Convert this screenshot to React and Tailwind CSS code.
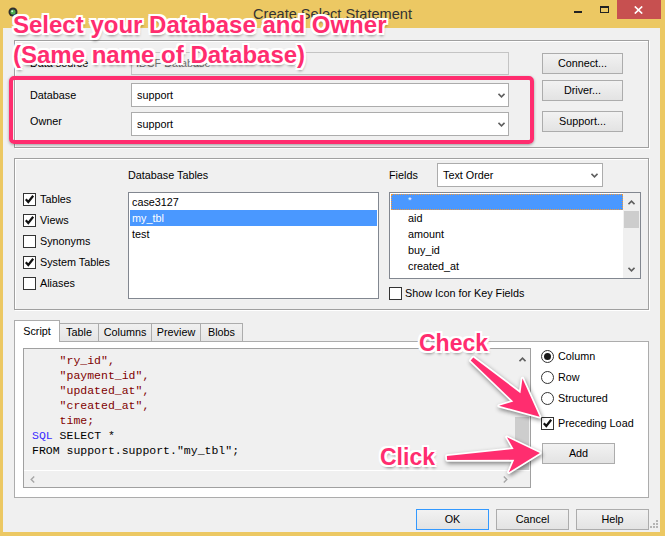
import React from 'react';

// small chevron used by combos and scrollbars
const Chevron = ({ dir = 'down', color = '#5f5f5f' }) => {
  const d = {
    down: 'M0.5 0.8 L3.5 3.8 L6.5 0.8',
    up: 'M0.5 4.2 L3.5 1.2 L6.5 4.2',
  }[dir];
  return (
    <svg width="7" height="5" viewBox="0 0 7 5" className="shrink-0">
      <path d={d} fill="none" stroke={color} strokeWidth="1.6" />
    </svg>
  );
};

const SideArrow = ({ dir = 'left', color = '#a6a6a6' }) => (
  <svg width="5" height="7" viewBox="0 0 5 7" className="shrink-0">
    <path d={dir === 'left' ? 'M4.2 0.5 L1.2 3.5 L4.2 6.5' : 'M0.8 0.5 L3.8 3.5 L0.8 6.5'} fill="none" stroke={color} strokeWidth="1.4" />
  </svg>
);

const CheckBox = ({ checked }) => (
  <span className="w-[13px] h-[13px] border border-[#333] bg-white flex items-center justify-center shrink-0">
    {checked && (
      <svg width="11" height="11" viewBox="0 0 11 11">
        <path d="M1.8 5.2 L4.3 8 L9.2 1.8" fill="none" stroke="#111" strokeWidth="2.2" />
      </svg>
    )}
  </span>
);

const Radio = ({ checked }) => (
  <span className="w-[13px] h-[13px] rounded-full border border-[#333] bg-white flex items-center justify-center shrink-0">
    {checked && <span className="w-[7px] h-[7px] rounded-full bg-[#1a1a1a]" />}
  </span>
);

const Btn = ({ children, className = '' }) => (
  <div className={`h-[21px] border bg-linear-to-b from-[#f2f2f2] to-[#e3e3e3] flex items-center justify-center ${className}`}>
    {children}
  </div>
);

const Combo = ({ value, className = '' }) => (
  <div className={`h-[24px] bg-white border border-[#acacac] flex items-center pl-[5px] pr-[3px] ${className}`}>
    <span className="flex-1">{value}</span>
    <Chevron />
  </div>
);

const etched = 'border border-[#a0a0a0] shadow-[inset_1px_1px_0_#fff,1px_1px_0_#fff]';

const App = () => {
  const tableItems = ['case3127', 'my_tbl', 'test'];
  const fieldItems = ['aid', 'amount', 'buy_id', 'created_at'];

  return (
    <div className="relative w-[665px] h-[536px] overflow-hidden bg-[#ecc863] font-['Liberation_Sans',Arial,sans-serif] text-[10.8px] text-black">
      {/* Title bar */}
      <div className="flex items-start h-[28px]">
        <div className="w-[100px] pl-[8px] pt-[7px]">
          <svg width="10" height="10" viewBox="0 0 10 10">
            <circle cx="5" cy="5" r="4.5" fill="#2f2f2f" />
            <circle cx="5" cy="5" r="2.6" fill="#4caf50" />
            <circle cx="4.2" cy="4.2" r="1" fill="#d9f5d9" />
          </svg>
        </div>
        <div className="flex-1 text-center text-[14.6px] leading-[28px] text-[#333]">Create Select Statement</div>
        <div className="w-[100px] flex justify-end pr-[4px]">
          <div className="w-[27px] h-[19px] flex justify-center pt-[11px]">
            <span className="w-[8px] h-[2px] bg-[#222]" />
          </div>
          <div className="w-[26px] h-[19px] flex justify-center pt-[6px]">
            <span className="w-[9px] h-[7px] border border-t-2 border-[#222]" />
          </div>
          <div className="w-[45px] h-[19px] bg-[#c75050] flex items-center justify-center">
            <svg width="9" height="8" viewBox="0 0 9 8">
              <path d="M0.8 0.5 L8.2 7.5 M8.2 0.5 L0.8 7.5" stroke="#fff" strokeWidth="1.7" />
            </svg>
          </div>
        </div>
      </div>

      {/* Client area */}
      <div className="relative ml-[3px] w-[657px] h-[504px] bg-[#f0f0f0] flex flex-col">
        {/* Data source / database / owner */}
        <div className={`ml-[11px] mt-[12px] w-[635px] h-[108px] flex ${etched}`}>
          <div className="flex flex-col pl-[15px] pt-[11px]">
            <div className="flex items-center h-[23px]">
              <span className="w-[101px]">Data source</span>
              <div className="w-[378px] h-[23px] border border-[#c4c4c4] bg-[#f0f0f0] flex items-center pl-[4px] text-[#6d6d6d]">IDCF Database</div>
            </div>
            <div className="flex items-center mt-[8px]">
              <span className="w-[101px]">Database</span>
              <Combo value="support" className="w-[378px]" />
            </div>
            <div className="flex items-center mt-[5px]">
              <span className="w-[101px] mb-[5px]">Owner</span>
              <Combo value="support" className="w-[378px]" />
            </div>
          </div>
          <div className="flex flex-col ml-[33px] pt-[12px]">
            <Btn className="w-[81px] border-[#acacac]">Connect...</Btn>
            <Btn className="w-[81px] border-[#acacac] mt-[6px]">Driver...</Btn>
            <Btn className="w-[81px] border-[#acacac] mt-[10px]">Support...</Btn>
          </div>
        </div>

        {/* Tables / fields */}
        <div className={`ml-[11px] mt-[10px] w-[635px] h-[152px] flex ${etched}`}>
          <div className="flex flex-col pl-[8px] pt-[30px] w-[113px]">
            {[
              ['Tables', true],
              ['Views', true],
              ['Synonyms', false],
              ['System Tables', true],
              ['Aliases', false],
            ].map(([label, on]) => (
              <div key={label} className="flex items-center gap-[4px] h-[21px]">
                <CheckBox checked={on} />
                <span>{label}</span>
              </div>
            ))}
          </div>
          <div className="flex flex-col w-[251px]">
            <div className="h-[33px] flex items-center">Database Tables</div>
            <div className="h-[107px] border border-[#828790] bg-white p-[1px]">
              {tableItems.map((t) => (
                <div key={t} className={`h-[16px] flex items-center pl-[2px] ${t === 'my_tbl' ? 'bg-[#4a98ff] text-white' : ''}`}>
                  {t}
                </div>
              ))}
            </div>
          </div>
          <div className="flex flex-col ml-[10px] w-[252px]">
            <div className="flex items-center mt-[4px]">
              <span className="w-[48px]">Fields</span>
              <Combo value="Text Order" className="w-[166px] pr-[4px]" />
            </div>
            <div className="mt-[5px] h-[87px] border border-[#828790] bg-white flex">
              <div className="flex-1 p-[1px] pr-0">
                <div className="h-[16px] bg-[#4a98ff] border border-dotted border-[#f29a3c] text-white flex items-start pl-[16px] text-[9px] leading-[10px]">*</div>
                {fieldItems.map((f) => (
                  <div key={f} className="h-[16px] flex items-center pl-[17px]">{f}</div>
                ))}
              </div>
              <div className="w-[17px] bg-[#f0f0f0] flex flex-col">
                <div className="h-[18px] flex items-center justify-center"><Chevron dir="up" /></div>
                <div className="mx-[1px] h-[17px] bg-[#cdcdcd]" />
                <div className="mt-auto h-[17px] flex items-center justify-center"><Chevron /></div>
              </div>
            </div>
            <div className="mt-[6px] flex items-center gap-[3px]">
              <CheckBox />
              <span>Show Icon for Key Fields</span>
            </div>
          </div>
        </div>

        {/* Tabs */}
        <div className="relative z-10 ml-[11px] mt-[10px] -mb-[1px] h-[22px] flex items-end">
          <div className="w-[46px] h-[22px] bg-white border border-b-0 border-[#acacac] flex items-center justify-center pb-[1px]">Script</div>
          {[
            ['Table', 'w-[39px]'],
            ['Columns', 'w-[53px]'],
            ['Preview', 'w-[49px]'],
            ['Blobs', 'w-[42px]'],
          ].map(([t, w]) => (
            <div key={t} className={`${w} h-[19px] border border-l-0 border-[#acacac] bg-linear-to-b from-[#f0f0f0] to-[#e5e5e5] flex items-center justify-center`}>
              {t}
            </div>
          ))}
        </div>
        <div className="ml-[11px] w-[635px] h-[157px] border border-[#acacac] bg-white flex">
          {/* Script editor */}
          <div className="ml-[8px] mt-[6px] w-[508px] h-[140px] border border-[#a0a0a0] bg-[#f0f0f0] flex flex-col">
            <div className="flex-1 flex">
              <div className="flex-1 pl-[8px] pt-[4px] font-['Liberation_Mono','Courier_New',monospace] text-[11.5px] leading-[15px] whitespace-pre text-black">
                <div className="text-[#800000]">{'    "ry_id",'}</div>
                <div className="text-[#800000]">{'    "payment_id",'}</div>
                <div className="text-[#800000]">{'    "updated_at",'}</div>
                <div className="text-[#800000]">{'    "created_at",'}</div>
                <div className="text-[#800000]">{'    time;'}</div>
                <div><span className="text-[#3a2aff]">SQL</span> SELECT *</div>
                <div>{'FROM support.support."my_tbl";'}</div>
              </div>
              <div className="w-[16px] flex flex-col">
                <div className="h-[19px] pt-[2px] flex items-center justify-center"><Chevron dir="up" /></div>
                <div className="mt-auto mx-[1px] h-[53px] bg-[#cdcdcd]" />
              </div>
            </div>
            <div className="h-[17px] flex border-t border-white">
              <div className="flex-1 flex items-center justify-between px-[6px]">
                <SideArrow dir="left" />
                <SideArrow dir="right" />
              </div>
              <div className="w-[16px]" />
            </div>
          </div>

          {/* Options */}
          <div className="ml-[10px] pt-[4px] flex flex-col">
            {[
              ['Column', true],
              ['Row', false],
              ['Structured', false],
            ].map(([label, on]) => (
              <div key={label} className="h-[21px] flex items-center gap-[4px]">
                <Radio checked={on} />
                <span>{label}</span>
              </div>
            ))}
            <div className="h-[21px] mt-[4px] flex items-center gap-[4px]">
              <CheckBox checked />
              <span>Preceding Load</span>
            </div>
            <Btn className="ml-[1px] mt-[9px] w-[73px] border-[#acacac]">Add</Btn>
          </div>
        </div>

        {/* Dialog buttons */}
        <div className="mt-[11px] pr-[11px] flex justify-end gap-[7px]">
          <Btn className="w-[73px] border-[#3399ff]">OK</Btn>
          <Btn className="w-[73px] border-[#acacac]">Cancel</Btn>
          <Btn className="w-[73px] border-[#acacac]">Help</Btn>
        </div>

        {/* size grip */}
        <svg className="absolute right-[2px] bottom-[4px]" width="8" height="8" viewBox="0 0 8 8">
          {[[6, 0], [3, 3], [6, 3], [0, 6], [3, 6], [6, 6]].map(([x, y]) => (
            <rect key={`${x}-${y}`} x={x} y={y} width="2" height="2" fill="#b5b5b5" />
          ))}
        </svg>
      </div>

      {/* Annotations */}
      <div className="absolute left-[9px] top-[76px] w-[525px] h-[68px] border-4 border-[#ff2d6f] rounded-[5px] shadow-[0_1px_3px_rgba(0,0,0,0.35)]" />

      <svg className="absolute inset-0 drop-shadow-[1px_2px_2px_rgba(0,0,0,0.45)]" width="665" height="536" viewBox="0 0 665 536">
        <g transform="translate(472 359) rotate(40.5)">
          <polygon points="0,-2 59,-5.5 51,-18 89,0 51,18 59,5.5 0,2" fill="#ff2d6f" stroke="#fff" strokeWidth="3.5" strokeLinejoin="round" paintOrder="stroke" />
        </g>
        <g transform="translate(447 458) rotate(-3.1)">
          <polygon points="0,-2 67,-5.5 61,-17.5 93,0 61,17.5 67,5.5 0,2" fill="#ff2d6f" stroke="#fff" strokeWidth="3.5" strokeLinejoin="round" paintOrder="stroke" />
        </g>
      </svg>

      <div className="absolute left-[13px] top-[13px] text-[24px] leading-none font-bold whitespace-nowrap text-[#ff2d6f] [text-shadow:2px_0_0_#fff,-2px_0_0_#fff,0_2px_0_#fff,0_-2px_0_#fff,2px_2px_0_#fff,-2px_-2px_0_#fff,2px_-2px_0_#fff,-2px_2px_0_#fff,1px_3px_3px_rgba(0,0,0,0.45)]">
        Select your Database and Owner
      </div>
      <div className="absolute left-[13px] top-[43px] text-[24px] leading-none font-bold whitespace-nowrap text-[#ff2d6f] [text-shadow:2px_0_0_#fff,-2px_0_0_#fff,0_2px_0_#fff,0_-2px_0_#fff,2px_2px_0_#fff,-2px_-2px_0_#fff,2px_-2px_0_#fff,-2px_2px_0_#fff,1px_3px_3px_rgba(0,0,0,0.45)]">
        (Same name of Database)
      </div>
      <div className="absolute left-[419px] top-[332px] text-[23px] leading-none font-bold whitespace-nowrap text-[#ff2d6f] [text-shadow:2px_0_0_#fff,-2px_0_0_#fff,0_2px_0_#fff,0_-2px_0_#fff,2px_2px_0_#fff,-2px_-2px_0_#fff,2px_-2px_0_#fff,-2px_2px_0_#fff,1px_3px_3px_rgba(0,0,0,0.45)]">
        Check
      </div>
      <div className="absolute left-[380px] top-[446px] text-[23px] leading-none font-bold whitespace-nowrap text-[#ff2d6f] [text-shadow:2px_0_0_#fff,-2px_0_0_#fff,0_2px_0_#fff,0_-2px_0_#fff,2px_2px_0_#fff,-2px_-2px_0_#fff,2px_-2px_0_#fff,-2px_2px_0_#fff,1px_3px_3px_rgba(0,0,0,0.45)]">
        Click
      </div>
    </div>
  );
};

export default App;
